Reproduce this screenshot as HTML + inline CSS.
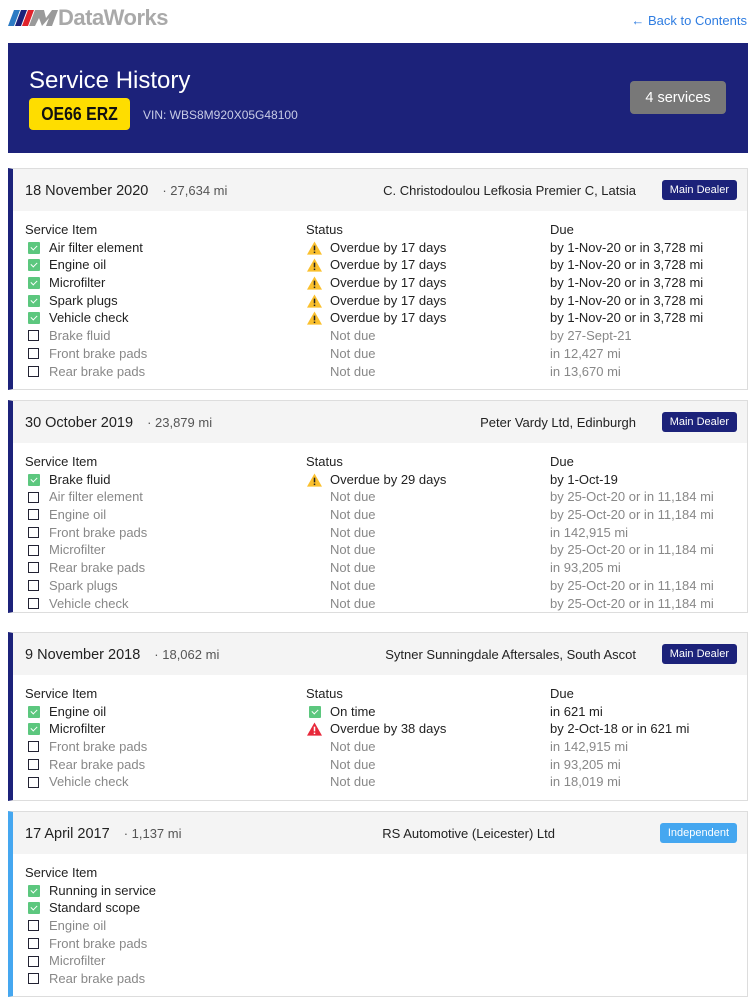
<!DOCTYPE html>
<html><head><meta charset="utf-8"><style>
*{box-sizing:border-box;margin:0;padding:0}
body{width:756px;height:1003px;background:#fff;font-family:"Liberation Sans",sans-serif;color:#222;position:relative;overflow:hidden}
.logo{position:absolute;left:8px;top:6px;height:24px;display:flex;align-items:center}
.logo .t{font-weight:bold;font-size:22px;color:#a9a9a9;letter-spacing:-0.5px;margin-left:0px}
.back{position:absolute;right:9px;top:13px;font-size:13px;color:#2f7de1}
.banner{position:absolute;left:8px;top:43px;width:740px;height:110px;background:#1c227a}
.banner h1{position:absolute;left:21px;top:24px;font-size:24px;font-weight:normal;color:#fff}
.plate{position:absolute;left:21px;top:55px;width:101px;height:32px;background:#fedd00;border-radius:4px;font-weight:bold;font-size:18px;text-align:center;line-height:32px;color:#111}
.plate span{display:inline-block;transform:scaleX(0.88)}
.vin{position:absolute;left:135px;top:65px;font-size:12px;color:#c8cce6}
.pill{position:absolute;left:622px;top:38px;width:96px;height:33px;background:#787878;border-radius:4px;color:#fff;font-size:14.5px;text-align:center;line-height:35px}
.card{position:absolute;left:8px;width:740px;border:1px solid #ddd;border-left:5px solid #1c227a;background:#fff}
.card.ind{border-left-color:#45a7f0}
.hd{height:42px;background:#f4f4f4;position:relative}
.date{position:absolute;left:12px;top:14px;font-size:14.5px}
.mi{color:#555;font-size:13px;margin-left:10px}
.loc{position:absolute;right:111px;top:14px;font-size:13px}
.badge{position:absolute;right:10px;top:11px;height:20px;padding:0 8px;background:#1c227a;color:#fff;font-size:11px;line-height:20px;border-radius:3px}
.ind .badge{background:#45a7f0}
.bd{padding:10px 0 10px 12px;position:relative;font-size:13px;line-height:17.7px}
.col{position:absolute;top:10px}
.row{display:flex;align-items:center;height:17.7px;white-space:nowrap}
.g{color:#888}
.cb{width:12px;height:12px;margin:0 9px 0 3px;flex:none}
.ck{background:#5cc77e;border-radius:1px;position:relative}
.ck:after{content:"";position:absolute;left:3.5px;top:2px;width:3px;height:5px;border:solid #fff;border-width:0 1.5px 1.5px 0;transform:rotate(45deg)}
.ub{border:1.3px solid #223;width:11px;height:11px;margin:0 10px 0 3px}
.ic{width:15px;height:14px;margin:0 8px 0 1px;flex:none}
.sp{width:24px;flex:none}
</style></head><body>
<div class="logo"><svg width="50" height="20" viewBox="0 0 50 20"><polygon points="6,2 12,2 6,18 0,18" fill="#2c7bc4"/><polygon points="13,2 19,2 13,18 7,18" fill="#1c227a"/><polygon points="20,2 26,2 20,18 14,18" fill="#e0222b"/><polygon points="27,2 36,2 38,10 44,2 50,2 44,18 38,18 41,10 34,18 31,10 27,18 21,18" fill="#9a9a9a"/></svg><span class="t">DataWorks</span></div>
<div class="back">← Back to Contents</div>
<div class="banner"><h1>Service History</h1><div class="plate"><span>OE66 ERZ</span></div><div class="vin">VIN: WBS8M920X05G48100</div><div class="pill">4 services</div></div>

<div class="card" style="top:168px;height:222px">
<div class="hd"><span class="date">18 November 2020 <span class="mi">· 27,634 mi</span></span><span class="loc">C. Christodoulou Lefkosia Premier C, Latsia</span><span class="badge">Main Dealer</span></div>
<div class="bd">
<div class="row">Service Item</div>
<div class="row"><i class="cb ck"></i>Air filter element</div>
<div class="row"><i class="cb ck"></i>Engine oil</div>
<div class="row"><i class="cb ck"></i>Microfilter</div>
<div class="row"><i class="cb ck"></i>Spark plugs</div>
<div class="row"><i class="cb ck"></i>Vehicle check</div>
<div class="row g"><i class="cb ub"></i>Brake fluid</div>
<div class="row g"><i class="cb ub"></i>Front brake pads</div>
<div class="row g"><i class="cb ub"></i>Rear brake pads</div>
<div class="col" style="left:293px">
<div class="row">Status</div>
<div class="row"><svg class="ic" viewBox="0 0 16 14"><path d="M8 0L16 14H0Z" fill="#fbc02d"/><rect x="7.2" y="4.5" width="1.6" height="5" fill="#222"/><rect x="7.2" y="10.8" width="1.6" height="1.6" fill="#222"/></svg>Overdue by 17 days</div>
<div class="row"><svg class="ic" viewBox="0 0 16 14"><path d="M8 0L16 14H0Z" fill="#fbc02d"/><rect x="7.2" y="4.5" width="1.6" height="5" fill="#222"/><rect x="7.2" y="10.8" width="1.6" height="1.6" fill="#222"/></svg>Overdue by 17 days</div>
<div class="row"><svg class="ic" viewBox="0 0 16 14"><path d="M8 0L16 14H0Z" fill="#fbc02d"/><rect x="7.2" y="4.5" width="1.6" height="5" fill="#222"/><rect x="7.2" y="10.8" width="1.6" height="1.6" fill="#222"/></svg>Overdue by 17 days</div>
<div class="row"><svg class="ic" viewBox="0 0 16 14"><path d="M8 0L16 14H0Z" fill="#fbc02d"/><rect x="7.2" y="4.5" width="1.6" height="5" fill="#222"/><rect x="7.2" y="10.8" width="1.6" height="1.6" fill="#222"/></svg>Overdue by 17 days</div>
<div class="row"><svg class="ic" viewBox="0 0 16 14"><path d="M8 0L16 14H0Z" fill="#fbc02d"/><rect x="7.2" y="4.5" width="1.6" height="5" fill="#222"/><rect x="7.2" y="10.8" width="1.6" height="1.6" fill="#222"/></svg>Overdue by 17 days</div>
<div class="row g"><i class="sp"></i>Not due</div><div class="row g"><i class="sp"></i>Not due</div><div class="row g"><i class="sp"></i>Not due</div>
</div>
<div class="col" style="left:537px">
<div class="row">Due</div>
<div class="row">by 1-Nov-20 or in 3,728 mi</div><div class="row">by 1-Nov-20 or in 3,728 mi</div><div class="row">by 1-Nov-20 or in 3,728 mi</div><div class="row">by 1-Nov-20 or in 3,728 mi</div><div class="row">by 1-Nov-20 or in 3,728 mi</div>
<div class="row g">by 27-Sept-21</div><div class="row g">in 12,427 mi</div><div class="row g">in 13,670 mi</div>
</div></div></div>

<div class="card" style="top:400px;height:213px">
<div class="hd"><span class="date">30 October 2019 <span class="mi">· 23,879 mi</span></span><span class="loc">Peter Vardy Ltd, Edinburgh</span><span class="badge">Main Dealer</span></div>
<div class="bd">
<div class="row">Service Item</div>
<div class="row"><i class="cb ck"></i>Brake fluid</div>
<div class="row g"><i class="cb ub"></i>Air filter element</div>
<div class="row g"><i class="cb ub"></i>Engine oil</div>
<div class="row g"><i class="cb ub"></i>Front brake pads</div>
<div class="row g"><i class="cb ub"></i>Microfilter</div>
<div class="row g"><i class="cb ub"></i>Rear brake pads</div>
<div class="row g"><i class="cb ub"></i>Spark plugs</div>
<div class="row g"><i class="cb ub"></i>Vehicle check</div>
<div class="col" style="left:293px">
<div class="row">Status</div>
<div class="row"><svg class="ic" viewBox="0 0 16 14"><path d="M8 0L16 14H0Z" fill="#fbc02d"/><rect x="7.2" y="4.5" width="1.6" height="5" fill="#222"/><rect x="7.2" y="10.8" width="1.6" height="1.6" fill="#222"/></svg>Overdue by 29 days</div>
<div class="row g"><i class="sp"></i>Not due</div><div class="row g"><i class="sp"></i>Not due</div><div class="row g"><i class="sp"></i>Not due</div><div class="row g"><i class="sp"></i>Not due</div><div class="row g"><i class="sp"></i>Not due</div><div class="row g"><i class="sp"></i>Not due</div><div class="row g"><i class="sp"></i>Not due</div>
</div>
<div class="col" style="left:537px">
<div class="row">Due</div>
<div class="row">by 1-Oct-19</div>
<div class="row g">by 25-Oct-20 or in 11,184 mi</div><div class="row g">by 25-Oct-20 or in 11,184 mi</div><div class="row g">in 142,915 mi</div><div class="row g">by 25-Oct-20 or in 11,184 mi</div><div class="row g">in 93,205 mi</div><div class="row g">by 25-Oct-20 or in 11,184 mi</div><div class="row g">by 25-Oct-20 or in 11,184 mi</div>
</div></div></div>

<div class="card" style="top:632px;height:169px">
<div class="hd"><span class="date">9 November 2018 <span class="mi">· 18,062 mi</span></span><span class="loc">Sytner Sunningdale Aftersales, South Ascot</span><span class="badge">Main Dealer</span></div>
<div class="bd">
<div class="row">Service Item</div>
<div class="row"><i class="cb ck"></i>Engine oil</div>
<div class="row"><i class="cb ck"></i>Microfilter</div>
<div class="row g"><i class="cb ub"></i>Front brake pads</div>
<div class="row g"><i class="cb ub"></i>Rear brake pads</div>
<div class="row g"><i class="cb ub"></i>Vehicle check</div>
<div class="col" style="left:293px">
<div class="row">Status</div>
<div class="row"><i class="cb ck" style="margin:0 9px 0 3px"></i>On time</div>
<div class="row"><svg class="ic" viewBox="0 0 16 14"><path d="M8 0L16 14H0Z" fill="#e8283a"/><rect x="7.2" y="4.5" width="1.6" height="5" fill="#fff"/><rect x="7.2" y="10.8" width="1.6" height="1.6" fill="#fff"/></svg>Overdue by 38 days</div>
<div class="row g"><i class="sp"></i>Not due</div><div class="row g"><i class="sp"></i>Not due</div><div class="row g"><i class="sp"></i>Not due</div>
</div>
<div class="col" style="left:537px">
<div class="row">Due</div>
<div class="row">in 621 mi</div><div class="row">by 2-Oct-18 or in 621 mi</div>
<div class="row g">in 142,915 mi</div><div class="row g">in 93,205 mi</div><div class="row g">in 18,019 mi</div>
</div></div></div>

<div class="card ind" style="top:811px;height:186px">
<div class="hd"><span class="date">17 April 2017 <span class="mi">· 1,137 mi</span></span><span class="loc" style="right:192px">RS Automotive (Leicester) Ltd</span><span class="badge">Independent</span></div>
<div class="bd">
<div class="row">Service Item</div>
<div class="row"><i class="cb ck"></i>Running in service</div>
<div class="row"><i class="cb ck"></i>Standard scope</div>
<div class="row g"><i class="cb ub"></i>Engine oil</div>
<div class="row g"><i class="cb ub"></i>Front brake pads</div>
<div class="row g"><i class="cb ub"></i>Microfilter</div>
<div class="row g"><i class="cb ub"></i>Rear brake pads</div>
</div></div>
</body></html>
